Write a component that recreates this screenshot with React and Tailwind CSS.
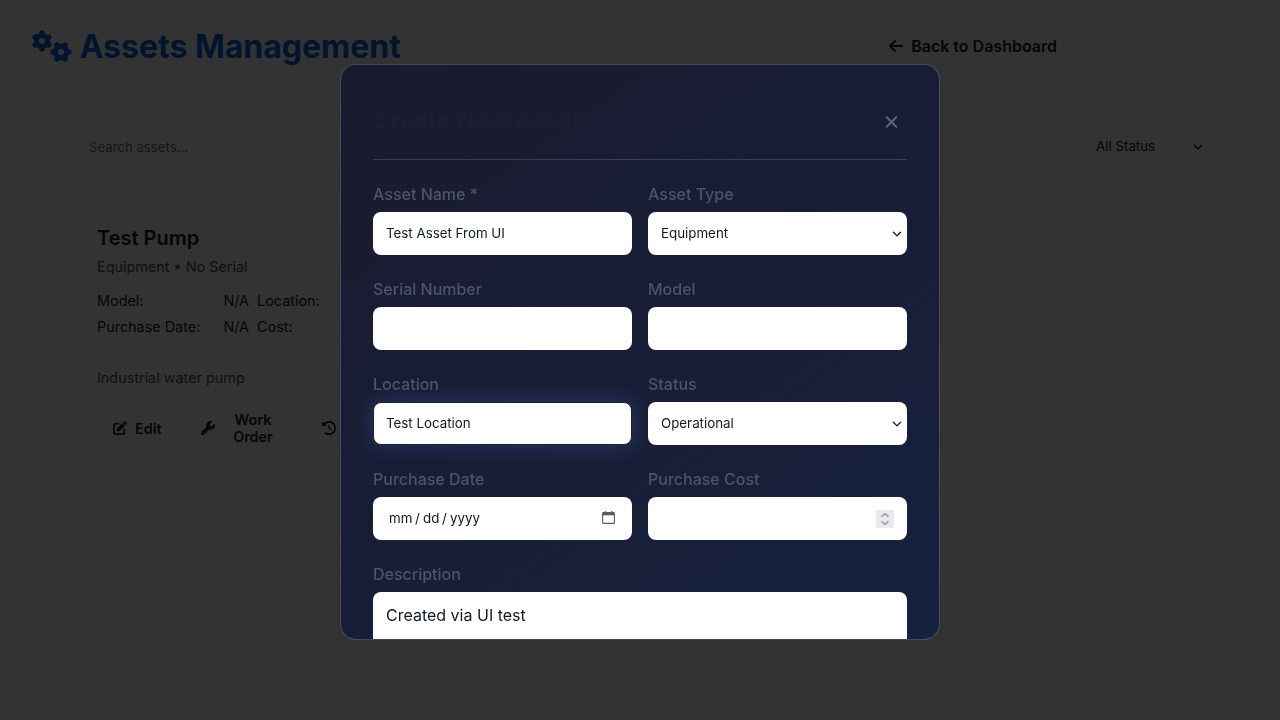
import { FaArrowLeft, FaClockRotateLeft, FaGears, FaPenToSquare, FaWrench } from "react-icons/fa6";

const control =
  "block h-[43px] w-full appearance-none rounded-lg border border-transparent bg-white px-3 font-['Inter',sans-serif] text-[13.333px] text-[#111827] outline-none";

function Chevron() {
  return (
    <svg
      className="pointer-events-none -ml-[15px] shrink-0"
      width="10"
      height="10"
      viewBox="0 0 10 10"
      fill="none"
      stroke="#111827"
      strokeWidth="1.3"
      strokeLinecap="round"
      strokeLinejoin="round"
    >
      <path d="M1.4 3.2 5 6.9 8.6 3.2" />
    </svg>
  );
}

function Select({ value }) {
  return (
    <div className="flex items-center">
      <select className={control + " pt-px"}>
        <option>{value}</option>
      </select>
      <Chevron />
    </div>
  );
}

function DateControl() {
  return (
    <div className="flex h-[43px] items-center rounded-lg bg-white pr-4 pl-4 text-[13.333px] leading-5 text-[#111827]">
      <span className="-mt-[2px] flex flex-1">
        <span className="w-[26px]">mm</span>
        <span className="w-2">/</span>
        <span className="w-[19px]">dd</span>
        <span className="w-2">/</span>
        <span>yyyy</span>
      </span>
      <svg className="-mt-[2px] mr-px" width="13" height="13" viewBox="0 0 13 13" fill="none" stroke="#5b5b66">
        <rect x="0.6" y="1.6" width="11.8" height="10.8" rx="1" strokeWidth="1.1" />
        <path d="M0.5 3H12.5" strokeWidth="2.6" />
        <path d="M3.3 0V2M9.7 0V2" strokeWidth="1.3" />
      </svg>
    </div>
  );
}

function NumberControl() {
  return (
    <div className="flex h-[43px] items-center justify-end rounded-lg bg-white pr-[13px]">
      <span className="mt-px flex size-[18px] items-center justify-center bg-[#e9e9ed]">
        <svg width="18" height="18" viewBox="0 0 18 18" fill="none" stroke="#8f8f9d" strokeWidth="1.4">
          <path d="M5.6 6.8 9 3.6 12.4 6.8M5.6 11.2 9 14.4 12.4 11.2" />
        </svg>
      </span>
    </div>
  );
}

function Field({ label, className = "", children }) {
  return (
    <div className={className}>
      <label className="mb-2 block text-base leading-5 font-medium text-[#4a5568]">{label}</label>
      {children}
    </div>
  );
}

function Detail({ label, value }) {
  return (
    <div className="flex justify-between">
      <span>{label}</span>
      {value && <span>{value}</span>}
    </div>
  );
}

function AssetCard() {
  return (
    <article className="h-[277px] w-[362px] rounded-xl border border-[#fcfcfc] bg-[#fdfdfd] p-6">
      <h3 className="text-xl leading-6 font-semibold text-[#1a202c]">Test Pump</h3>
      <p className="mt-[6px] text-[14.4px] leading-[22px] text-[#4a5568]">Equipment • No Serial</p>
      <div className="mt-3 grid grid-cols-2 gap-x-2 gap-y-1 text-[14.4px] leading-[22px] text-[#1a202c]">
        <Detail label="Model:" value="N/A" />
        <Detail label="Location:" />
        <Detail label="Purchase Date:" value="N/A" />
        <Detail label="Cost:" />
      </div>
      <p className="mt-[29px] text-[14.4px] leading-[22px] text-[#4a5568]">Industrial water pump</p>
      <div className="mt-[14px] flex gap-2 text-[14.4px] leading-[17px] font-semibold text-[#1a202c]">
        <button className="flex w-20 items-center gap-2 px-4 py-2">
          <FaPenToSquare className="size-[14px] shrink-0" />
          Edit
        </button>
        <button className="flex w-[114px] items-center gap-2 px-4 py-2">
          <FaWrench className="size-[14px] shrink-0" />
          <span className="flex-1 text-center">Work Order</span>
        </button>
        <button className="-ml-px flex items-center gap-2 px-4 py-2">
          <FaClockRotateLeft className="size-[14px] shrink-0" />
        </button>
      </div>
    </article>
  );
}

function CreateAssetDialog() {
  return (
    <div className="h-[576px] w-[600px] overflow-hidden rounded-2xl border border-white/20 bg-[linear-gradient(145deg,#1a1a2e_0%,#16213e_100%)] bg-origin-border p-8">
      <header className="mb-6 flex h-[63px] items-start justify-between border-b border-white/15">
        <h2 className="mt-[9px] text-2xl leading-[30px] font-semibold text-[#1a202c]">Create New Asset</h2>
        <button className="mt-[13px] mr-2 text-[#566378]">
          <svg className="h-6 w-[15px]" viewBox="0 0 15 24" fill="none" stroke="currentColor" strokeWidth="2.1" strokeLinecap="round">
            <path d="M2.7 7.2 12.3 16.8M12.3 7.2 2.7 16.8" />
          </svg>
        </button>
      </header>
      <form className="grid grid-cols-2 gap-x-4 gap-y-6">
        <Field label="Asset Name *">
          <input className={control + " pb-[2px]"} defaultValue="Test Asset From UI" />
        </Field>
        <Field label="Asset Type">
          <Select value="Equipment" />
        </Field>
        <Field label="Serial Number">
          <input className={control} />
        </Field>
        <Field label="Model">
          <input className={control} />
        </Field>
        <Field label="Location">
          <input
            className="block h-[43px] w-full rounded-lg border border-[#1a202c] bg-white px-3 pb-[2px] font-['Inter',sans-serif] text-[13.333px] text-[#111827] shadow-[0_0_20px_rgba(90,125,234,0.3)] outline-none"
            defaultValue="Test Location"
          />
        </Field>
        <Field label="Status">
          <Select value="Operational" />
        </Field>
        <Field label="Purchase Date">
          <DateControl />
        </Field>
        <Field label="Purchase Cost">
          <NumberControl />
        </Field>
        <Field label="Description" className="col-span-2">
          <textarea
            className="block h-24 w-full resize-none rounded-lg border border-transparent bg-white px-3 py-[10px] text-base leading-6 text-[#111827] outline-none"
            defaultValue="Created via UI test"
          />
        </Field>
      </form>
    </div>
  );
}

export default function App() {
  return (
    <div className="h-screen overflow-hidden bg-[#fafafa] font-['Inter',sans-serif]">
      <header className="flex h-[93px] items-center justify-between border-b border-[#ebebeb] bg-white pr-[223px] pl-8">
        <h1 className="flex items-center gap-[7.5px] text-[32px] leading-10 font-bold text-[#0066e6]">
          <FaGears className="h-8 w-10" />
          <span className="pt-[2px]">Assets Management</span>
        </h1>
        <a className="flex items-center gap-2 text-base leading-6 font-semibold text-[#1a202c]">
          <FaArrowLeft className="h-4 w-[14px]" />
          Back to Dashboard
        </a>
      </header>
      <main className="px-[72px] pt-8">
        <div className="flex items-start justify-between">
          <input
            className="h-11 w-[400px] rounded-lg bg-[#fdfdfd] px-[17px] text-[13.2px] text-[#1a202c] placeholder:text-[#757575]"
            placeholder="Search assets..."
          />
          <div className="mr-[5px] flex items-center">
            <select className="h-[43px] w-[125px] appearance-none rounded-lg border border-transparent bg-[#fdfdfd] px-3 pt-px text-[13.333px] text-[#1a202c]">
              <option>All Status</option>
            </select>
            <Chevron />
          </div>
        </div>
        <section className="mt-8">
          <AssetCard />
        </section>
      </main>
      <div className="fixed inset-0 flex items-start justify-center bg-black/80 pt-16">
        <CreateAssetDialog />
      </div>
    </div>
  );
}
